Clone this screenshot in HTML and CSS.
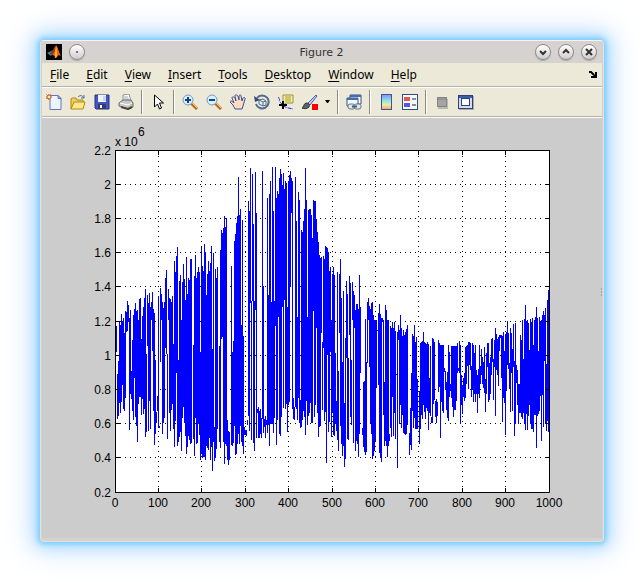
FILE: index.html
```html
<!DOCTYPE html>
<html lang="en">
<head>
    <meta charset="utf-8">
    <title>Figure 2</title>
    <link rel="stylesheet" href="styles.css">
</head>
<body>
    <main class="window">
        <header class="titlebar">
            <div class="title-left">
                <svg class="logo" viewBox="0 0 16 16">
                    <rect width="16" height="16" fill="#000"/>
                    <path d="M1 9l4-2 2 2-2 3z" fill="#2a8ba6"/>
                    <path d="M5 7l2-1 2-4 1 0-2 7-2 2-2-1z" fill="#8b3d20"/>
                    <path d="M10 1c2 2 3 8 5 11-2-1-3-1-4 1l-2 1c0-2-1-3-3-3 3-2 3-7 4-10z" fill="#e86a16"/>
                    <path d="M10 2c1 3 1 7 1 11l-2 1 0-4z" fill="#ffb13b"/>
                </svg>
                <button class="round" aria-label="Window menu"><svg viewBox="0 0 16 16"><circle cx="8" cy="8" r="1" fill="#555"/></svg></button>
            </div>
            <h1>Figure 2</h1>
            <div class="title-right">
                <button class="round" aria-label="Minimize"><svg viewBox="0 0 16 16"><path d="M5 7l3 3 3-3"/></svg></button>
                <button class="round" aria-label="Maximize"><svg viewBox="0 0 16 16"><path d="M5 9l3-3 3 3"/></svg></button>
                <button class="round" aria-label="Close"><svg viewBox="0 0 16 16"><path d="M5 5l6 6M11 5l-6 6"/></svg></button>
            </div>
        </header>

        <nav class="menubar">
            <button><u>F</u>ile</button>
            <button><u>E</u>dit</button>
            <button><u>V</u>iew</button>
            <button><u>I</u>nsert</button>
            <button><u>T</u>ools</button>
            <button><u>D</u>esktop</button>
            <button><u>W</u>indow</button>
            <button><u>H</u>elp</button>
            <button class="dock" aria-label="Dock figure"><svg viewBox="0 0 8 8"><path d="M0 1h2l3 3M7 1v5H2" fill="none" stroke="#000" stroke-width="2"/><path d="M7 2v5H2z"/></svg></button>
        </nav>

        <div class="toolbar">
            <button class="tool" aria-label="New figure"><svg viewBox="0 0 16 16">
                <path d="M4 1.500h8l3 3v11H4z" fill="#eef4ff" stroke="#5878b8"/>
                <path d="M12 1.500v3h3z" fill="#b8cdf4" stroke="#5878b8"/>
                <path d="M0 0l5 5M5 0L0 5M2.500 0v6M0 3h6" stroke="#e0895c"/>
                <circle cx="3" cy="3" r="2" fill="#fff0a0" stroke="#cf4f29"/>
            </svg></button>
            <button class="tool" aria-label="Open file"><svg viewBox="0 0 16 16">
                <path d="M1 15V5l1-1h4l1 2h6v3" fill="#f3cf61" stroke="#b48614"/>
                <path d="M1 15l3-7h11l-2 7z" fill="#ffe98e" stroke="#b48614"/>
                <path d="M8 3c2-2 4-2 6 1M14 1v3h-3" fill="none" stroke="#4a6a92"/>
            </svg></button>
            <button class="tool" aria-label="Save figure"><svg viewBox="0 0 16 16">
                <path d="M1 1h14v14H2l-1-1z" fill="#4455c4" stroke="#29327e"/>
                <path d="M4 1h8v7H4z" fill="#eef1ff"/>
                <path d="M9 2h3v5H9z" fill="#c7d0f5"/>
                <path d="M4 10h8v5H4z" fill="#303b74"/>
                <path d="M6 11h2v3H6z" fill="#fff"/>
            </svg></button>
            <button class="tool" aria-label="Print figure"><svg viewBox="0 0 16 16">
                <path d="M5 1l6-1 2 7H5z" fill="#fff" stroke="#8290a0"/>
                <path d="M6 3h4M6 5h5" stroke="#9ca8b5"/>
                <path d="M1 9l4-3h8l2 3v4l-5 2-9-3z" fill="#c8c8c8" stroke="#696969"/>
                <path d="M2 9l8 2 4-2" fill="none" stroke="#fff"/>
                <path d="M3 13l7 2 4-2" fill="none" stroke="#444" stroke-width="2"/>
                <path d="M12 11h2" stroke="#dbc11f"/>
            </svg></button>
            <span class="sep"></span>
            <button class="tool" aria-label="Edit plot"><svg viewBox="0 0 16 16">
                <path d="M4.500 1v12l3-3 2 5 2-1-2-5h4z" fill="#fff" stroke="#000"/>
            </svg></button>
            <span class="sep"></span>
            <button class="tool" aria-label="Zoom in"><svg viewBox="0 0 16 16">
                <path d="M9 9l6 6" stroke="#b46b21" stroke-width="3"/><path d="M10 9l5 5" stroke="#ffc76b"/>
                <circle cx="6" cy="6" r="5" fill="#d4f2ff" stroke="#7898c2"/>
                <path d="M3 6h6M6 3v6" stroke="#174286" stroke-width="2"/>
            </svg></button>
            <button class="tool" aria-label="Zoom out"><svg viewBox="0 0 16 16">
                <path d="M9 9l6 6" stroke="#b46b21" stroke-width="3"/><path d="M10 9l5 5" stroke="#ffc76b"/>
                <circle cx="6" cy="6" r="5" fill="#d4f2ff" stroke="#7898c2"/>
                <path d="M3 6h6" stroke="#174286" stroke-width="2"/>
            </svg></button>
            <button class="tool" aria-label="Pan"><svg viewBox="0 0 16 16">
                <path d="M5 15L3 11 0 8c0-2 2-1 4 1L2 4c0-2 2-1 3 0l1 3-1-5c0-2 2-1 3 0l1 4V2c1-2 2-1 2 0l1 5 1-3c1-1 3 0 2 1l-2 7-1 3z" fill="#ffdcc0" stroke="#34549a"/>
            </svg></button>
            <button class="tool" aria-label="Rotate 3D"><svg viewBox="0 0 16 16">
                <path d="M3 4a6.500 6.500 0 1 1-1 6" fill="none" stroke="#526b8e" stroke-width="2"/>
                <path d="M0 2l1 6 5-2z" fill="#354d70"/>
                <path d="M5 6l4-1 3 2v4l-3 1-4-2zM5 6l4 2 3-1M9 8v4" fill="#e8f1f9" stroke="#526b8e"/>
            </svg></button>
            <button class="tool" aria-label="Data cursor"><svg viewBox="0 0 16 16">
                <path d="M0 3c2 1 1 5 3 6 3 5 8 5 12 6" fill="none" stroke="#22f" stroke-dasharray="4 1"/>
                <path d="M5 1h10v8H8l-3 2z" fill="#f6ef9c" stroke="#9a9231"/>
                <path d="M7 3h6M7 5h6M7 7h6" stroke="#a39b45"/>
                <path d="M1 11h8M5 7v8" stroke="#000" stroke-width="2"/>
            </svg></button>
            <button class="tool" aria-label="Brush data"><svg viewBox="0 0 16 16">
                <path d="M6 9L14 1l1 1-7 9z" fill="#b7caff" stroke="#505f9e"/>
                <path d="M0 14c2 0 1-4 4-5 3 0 4 2 3 4-2 2-5 2-7 1z" fill="#5c6470" stroke="#333"/>
                <rect x="10" y="10" width="6" height="6" fill="#f00"/>
            </svg></button>
            <button class="drop" aria-label="Brush colour"><svg viewBox="0 0 6 4"><path d="M0 0h5L3 3H2z"/></svg></button>
            <span class="sep"></span>
            <button class="tool" aria-label="Link plot"><svg viewBox="0 0 16 16">
                <path d="M4 1h11v9H4z" fill="#fff" stroke="#345184"/><path d="M4 1h11v2H4z" fill="#4a6caa"/>
                <path d="M1 4h11v8H1z" fill="#f4f8ff" stroke="#345184"/><path d="M1 4h11v2H1z" fill="#4a6caa"/>
                <rect x="2" y="10" width="7" height="5" rx="2" fill="#dfe7ee" stroke="#66798c"/>
                <rect x="8" y="10" width="7" height="5" rx="2" fill="#dfe7ee" stroke="#66798c"/>
                <path d="M6 12.500h5" stroke="#485a6c" stroke-width="2"/>
            </svg></button>
            <span class="sep"></span>
            <button class="tool" aria-label="Insert colorbar"><svg viewBox="0 0 16 16">
                <defs><linearGradient id="bar" x2="0" y2="1"><stop stop-color="#8f8bf0"/><stop offset=".4" stop-color="#87e4ef"/><stop offset=".7" stop-color="#f6eb93"/><stop offset="1" stop-color="#f19a8c"/></linearGradient></defs>
                <rect x="3.500" y=".5" width="10" height="15" fill="url(#bar)" stroke="#3a5890"/>
            </svg></button>
            <button class="tool" aria-label="Insert legend"><svg viewBox="0 0 16 16">
                <rect x=".5" y=".5" width="15" height="15" fill="#f5f8ff" stroke="#34497f"/>
                <path d="M2 3h6v4H2z" fill="#e65353"/><path d="M2 9h6v4H2z" fill="#5656df"/>
                <path d="M10 5h4M10 11h4" stroke="#222"/>
            </svg></button>
            <span class="sep"></span>
            <button class="tool" aria-label="Hide plot tools"><svg viewBox="0 0 16 16">
                <path d="M4 5h10v10H4z" fill="#b9b9b0"/><rect x="3.500" y="3.500" width="9" height="9" fill="#a5a5a5" stroke="#858585"/><path d="M4 5h8" stroke="#858585"/>
            </svg></button>
            <button class="tool" aria-label="Show plot tools"><svg viewBox="0 0 16 16">
                <rect x="1" y="2" width="15" height="14" fill="#aaa"/>
                <rect x=".5" y="1.500" width="14" height="13" fill="#d8dce8" stroke="#2b427f"/>
                <path d="M1 3h13" stroke="#3d5eae" stroke-width="2"/>
                <rect x="3.500" y="4.500" width="8" height="7" fill="#fff" stroke="#2b427f"/>
            </svg></button>
        </div>

        <svg class="figure" viewBox="42 118 560 420" role="img" aria-label="Line plot, 0 to 1000">
            <rect x="115" y="150" width="434" height="342" fill="#fff"/>
            <path id="grid" class="grid"/>
            <path id="series" class="series"/>
            <path id="ticks" class="axis"/>
            <path class="axis" d="M115.500 150.500H549.500V492.500H115.500Z"/>
            <g id="labels">
                <text x="115" y="146">x 10</text>
                <text x="138" y="136">6</text>
            </g>
            <path d="M601 289h1M601 292h1M601 295h1" stroke="#777"/>
        </svg>
    </main>
    <script src="plot.js"></script>
</body>
</html>
```
FILE: styles.css
```css
body {
    margin: 0;
    padding: 40px;
    background: #fff;
    color: #000;
    font-family: "Noto Sans", sans-serif;
    font-size: 12px;
}
button {
    border: 0;
    padding: 0;
    background: none;
    color: inherit;
    font: inherit;
}
svg {
    display: block;
}
.window {
    border: 1px solid #e2e1e0;
    border-top-color: #f4f4f4;
    border-radius: 4px;
    padding: 0 1px 3px;
    background: #d6d2d0;
    box-shadow: 0 0 5px 2px #78cbff, 0 0 16px 5px #a8dcff, 0 0 32px 10px #dce9ff;
}
.titlebar {
    display: grid;
    grid-template-columns: 1fr auto 1fr;
    align-items: center;
    height: 22px;
    padding: 0 5px 0 4px;
}
.titlebar h1 {
    margin: 0;
    color: #333;
    font: 11px "DejaVu Sans", sans-serif;
}
.title-left,
.title-right {
    display: flex;
    align-items: center;
    gap: 7px;
}
.title-right {
    justify-content: flex-end;
    gap: 7px;
}
.logo {
    width: 16px;
    height: 16px;
}
.round {
    width: 16px;
    height: 16px;
    box-sizing: border-box;
    border: 1px solid #8e8b89;
    border-radius: 50%;
    background: linear-gradient(#fff, #cfcdcb);
    box-shadow: 0 1px 1px #aaa;
}
.round svg {
    width: 16px;
    height: 16px;
    margin: -1px;
}
.round path {
    fill: none;
    stroke: #333;
    stroke-width: 2;
}
.menubar,
.toolbar {
    display: flex;
    align-items: center;
    background: #ece9d8;
    border-bottom: 1px solid #b4b2a6;
    box-shadow: inset 0 -1px #ece9d8;
}
.menubar {
    height: 23px;
    padding: 0;
}
.menubar button {
    padding: 0 9px 0 8px;
}
.menubar u {
    text-underline-offset: 2px;
}
.menubar .dock {
    margin-left: auto;
    padding: 0 5px;
}
.dock svg {
    width: 8px;
    height: 8px;
}
.toolbar {
    height: 28px;
    border-top: 1px solid #fff;
}
.tool {
    display: grid;
    place-items: center;
    width: 24px;
    height: 24px;
}
.tool svg {
    width: 16px;
    height: 16px;
}
.tool path,
.tool circle {
    stroke-linejoin: round;
}
.drop {
    display: grid;
    place-items: center;
    width: 12px;
    height: 24px;
}
.drop svg {
    width: 6px;
    height: 4px;
}
.sep {
    width: 1px;
    height: 24px;
    margin: 0 3px;
    background: #8c8a80;
    border-right: 1px solid #fff;
}
.figure {
    width: 100%;
    height: auto;
    background: #ccc;
    border-top: 1px solid #fff;
}
.figure text {
    font: 12px "Liberation Sans", sans-serif;
}
.axis {
    fill: none;
    stroke: #000;
}
.grid {
    fill: none;
    stroke: #000;
    stroke-dasharray: 1 4;
}
.series {
    fill: none;
    stroke: #00f;
}
```
FILE: plot.js
```javascript
const left = 115;
const right = 549;
const top_ = 150;
const bottom = 492;

// vertical extent of the signal for every column, "." where it has none
const extents = `
. 326-352 374-419 361-416 321-403 325-413 314-402 321-385 318-409 333-411
311-398 312-332 301-331 305-322 318-430 310-394 371-399 340-411 315-420 309-378
303-417 311-426 310-442 320-404 299-397 298-397 339-415 316-399 307-414 298-409
289-437 354-432 295-346 303-431 293-401 307-429 302-320 292-351 309-411 313-445
360-434 412-423 396-411 296-428 426-428 288-362 294-320 302-434 308-423 302-418
278-348 270-354 354-439 289-320 298-413 299-431 302-410 296-404 344-429 261-447
272-421 256-373 247-446 360-442 281-437 275-432 320-451 282-418 264-407 279-423
300-436 257-454 294-447 278-436 280-440 259-444 259-443 . 345-439 276-456
255-418 278-444 272-443 267-424 272-435 352-460 247-454 266-458 271-457 244-457
252-460 295-446 274-448 261-450 271-438 263-460 246-447 349-471 253-442 427-461
269-458 278-449 267-429 . 346-442 250-448 230-339 233-337 228-442 216-464
227-444 218-446 420-460 431-465 432-460 . 266-445 352-446 341-443 241-426
234-455 223-454 216-444 177-434 215-444 209-426 325-442 220-446 336-454 427-435
430-435 430-436 420-425 201-416 211-431 168-303 301-440 174-301 224-443 301-451
172-310 213-438 409-413 407-438 411-438 409-434 418-438 171-419 286-433 419-427
416-438 420-425 198-433 295-425 194-446 181-424 302-424 167-424 211-433 301-418
167-326 198-445 191-420 194-317 178-434 169-436 174-417 185-307 173-408 189-300
181-409 183-404 307-432 182-405 175-402 171-287 178-213 181-409 398-419 407-420
177-407 221-409 317-420 192-398 200-423 400-428 230-427 232-420 221-411 209-417
168-435 200-401 317-425 210-416 209-413 209-403 215-423 238-423 200-311 201-417
201-405 219-328 232-413 242-437 255-427 258-426 257-333 342-410 256-348 259-421
246-412 247-463 248-355 252-432 271-422 267-352 320-437 274-413 267-435 275-436
353-423 401-431 272-440 371-451 274-333 259-426 298-444 362-456 291-446 403-467
338-459 281-358 294-439 358-440 276-335 283-417 360-425 282-320 291-443 295-328
310-451 304-441 304-444 309-457 275-434 307-373 . 428-435 382-447 381-452
319-455 362-452 302-363 298-320 306-367 309-423 303-434 302-459 315-456 320-451
320-441 320-388 331-330 313-385 304-453 314-458 318-462 318-322 320-415 382-446
305-441 310-446 320-457 320-446 434-441 326-428 328-437 322-397 328-436 322-413
331-439 374-375 332-468 325-340 330-424 315-405 328-428 336-415 330-433 335-434
332-435 329-434 325-425 . 433-455 408-445 373-450 334-411 336-428 325-418
342-429 337-429 379-429 . 391-444 343-429 342-415 341-419 332-405 342-412
343-419 344-408 342-411 344-430 378-413 346-416 417-423 338-423 339-404 342-400
401-417 399-423 402-416 340-392 343-387 345-438 345-402 345-411 345-413 368-372
371-390 382-410 372-418 345-421 352-397 384-391 346-398 346-407 346-417 346-410
346-410 346-401 343-373 368-371 341-373 345-424 375-405 385-414 378-397 373-401
347-398 346-384 345-366 342-389 342-365 343-370 366-397 343-390 345-402 353-394
345-402 370-394 375-413 369-394 345-398 366-384 349-375 357-384 362-388 347-393
379-412 353-394 343-367 343-402 363-400 357-394 339-375 338-362 359-400 340-367
328-416 334-370 339-375 337-386 335-351 335-338 335-378 336-422 332-398 351-403
334-435 332-391 321-365 333-369 363-389 328-412 333-373 349-411 324-367 361-436
323-424 365-383 370-405 384-424 384-413 335-413 340-417 320-419 359-413 319-424
305-430 321-414 320-430 323-416 350-405 319-424 322-429 318-429 345-432 320-415
317-415 307-448 318-416 351-414 317-411 322-396 320-441 315-395 311-427 315-361
308-424 364-431 300-421 290-432 330-447`.trim().split(/\s+/);

let series = "";
extents.forEach((extent, i) => {
    if (extent === ".") return;
    const [from, to] = extent.split("-");
    series += `M${left + i + 0.5} ${from}V${to}`;
});
document.getElementById("series").setAttribute("d", series);

let grid = "";
let ticks = "";
const labels = document.getElementById("labels");

function addLabel(x, y, anchor, value) {
    const text = document.createElementNS("http://www.w3.org/2000/svg", "text");
    text.setAttribute("x", x);
    text.setAttribute("y", y);
    text.setAttribute("text-anchor", anchor);
    text.textContent = value;
    labels.appendChild(text);
}

for (let i = 0; i <= 10; i++) {
    const x = Math.floor(left + (right - left) * i / 10) + 0.5;
    const y = Math.floor(bottom - (bottom - top_) * i / 10) + 0.5;
    if (i > 0 && i < 10) {
        grid += `M${x} ${bottom}V${top_}M${left} ${y}H${right}`;
    }
    ticks += `M${x} ${bottom}v-4M${x} ${top_}v5M${left} ${y}h5M${right} ${y}h-4`;
    addLabel(Math.floor(x), 507, "middle", i * 100);
    addLabel(111, Math.floor(y) + 5, "end", Number((0.2 + i * 0.2).toFixed(1)));
}
document.getElementById("grid").setAttribute("d", grid);
document.getElementById("ticks").setAttribute("d", ticks);
```
